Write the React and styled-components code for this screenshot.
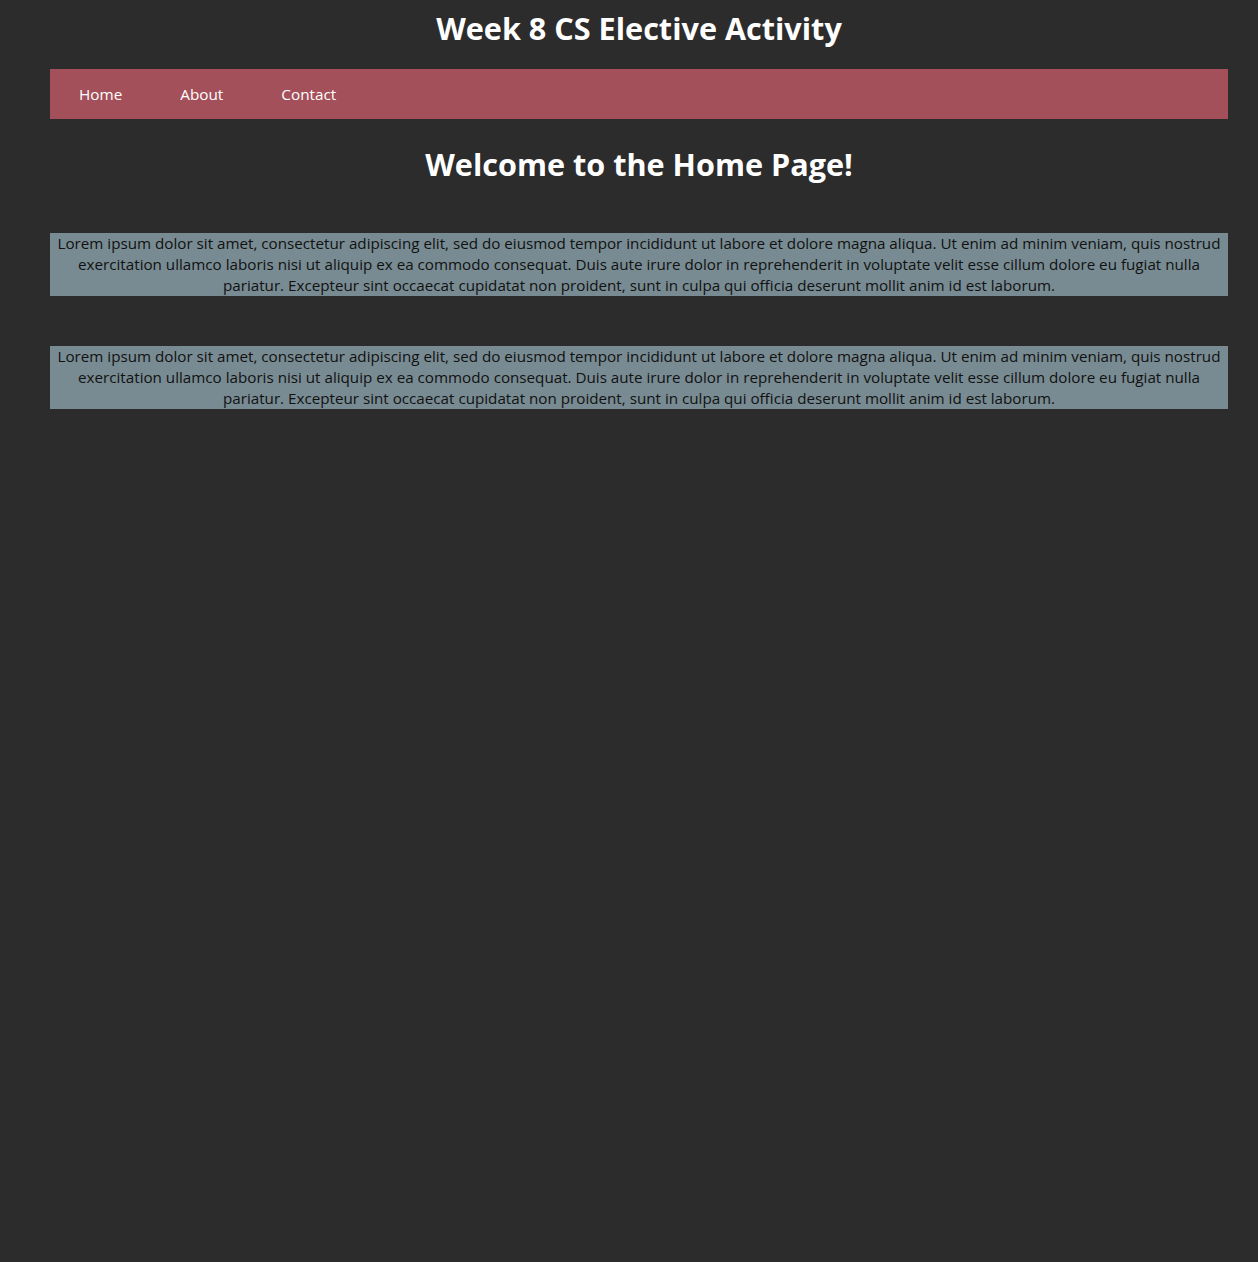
import React from "react";
import styled, { createGlobalStyle } from "styled-components";

const Global = createGlobalStyle`
  html, body { margin: 0; padding: 0; background: #2c2c2c; }
  body { font-family: "Open Sans", "Noto Sans", sans-serif; color: #fff; }
`;

const Page = styled.div`
  padding: 0 30px 0 50px;
`;

const Title = styled.h1`
  margin: 0;
  padding: 3px 0 16px;
  font-size: 30.6px;
  line-height: 50px;
  font-weight: 700;
  text-align: center;
`;

const Nav = styled.nav`
  display: flex;
  align-items: center;
  height: 50px;
  background: #a3505a;
`;

const NavLink = styled.a`
  padding: 0 29px;
  color: #fff;
  font-size: 15.3px;
  text-decoration: none;
`;

const Heading = styled.h2`
  margin: 0;
  padding: 20px 0 44px;
  font-size: 30.6px;
  line-height: 50px;
  font-weight: 700;
  text-align: center;
`;

const Para = styled.p`
  margin: 0 0 50px;
  background: #788b92;
  color: #111;
  font-size: 15.2px;
  line-height: 21px;
  text-align: center;
`;

const lorem =
  "Lorem ipsum dolor sit amet, consectetur adipiscing elit, sed do eiusmod tempor incididunt ut labore et dolore magna aliqua. Ut enim ad minim veniam, quis nostrud exercitation ullamco laboris nisi ut aliquip ex ea commodo consequat. Duis aute irure dolor in reprehenderit in voluptate velit esse cillum dolore eu fugiat nulla pariatur. Excepteur sint occaecat cupidatat non proident, sunt in culpa qui officia deserunt mollit anim id est laborum.";

export default function App() {
  return (
    <Page>
      <Global />
      <Title>Week 8 CS Elective Activity</Title>
      <Nav>
        <NavLink href="#">Home</NavLink>
        <NavLink href="#">About</NavLink>
        <NavLink href="#">Contact</NavLink>
      </Nav>
      <Heading>Welcome to the Home Page!</Heading>
      <Para>{lorem}</Para>
      <Para>{lorem}</Para>
    </Page>
  );
}
